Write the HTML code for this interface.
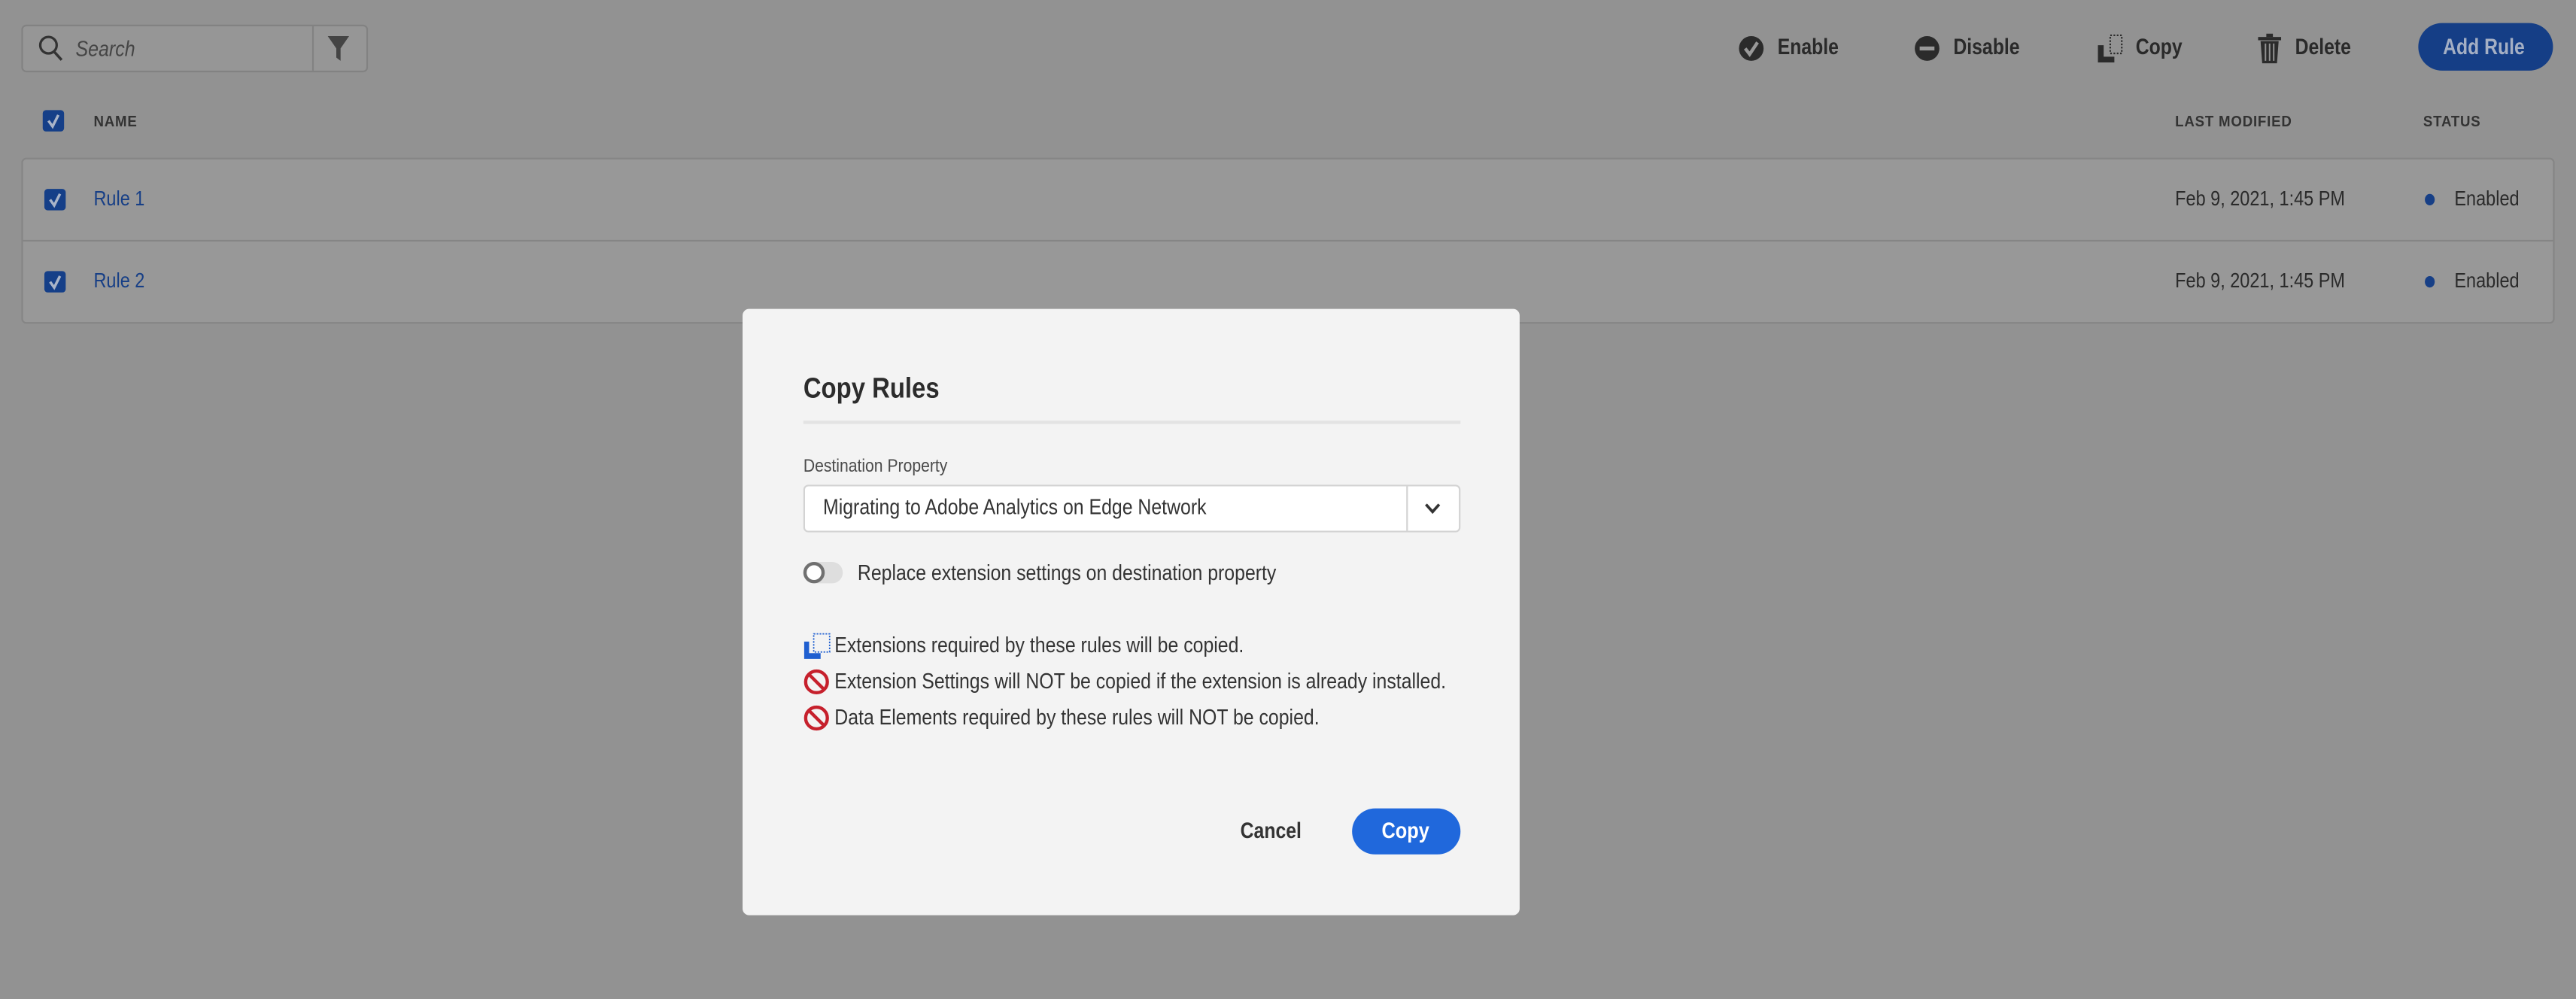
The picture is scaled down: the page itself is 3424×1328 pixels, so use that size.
<!DOCTYPE html>
<html><head><meta charset="utf-8">
<style>
html,body{margin:0;padding:0;width:3424px;height:1328px;overflow:hidden;background:#929292;}
#r{position:absolute;left:0;top:0;width:1568px;height:608px;transform:scale(2.18367,2.18421);transform-origin:0 0;font-family:"Liberation Sans",sans-serif;color:#2c2c2c;}
.a{position:absolute;}
.t{position:absolute;white-space:nowrap;transform-origin:0 50%;}
.cb{position:absolute;width:13px;height:13px;background:#153f88;border-radius:2px;}
.cb svg{position:absolute;left:0;top:0}
.hd{font-size:9.5px;font-weight:bold;color:#333;letter-spacing:.4px;transform:scaleX(.9);}
.tb{font-size:13.5px;font-weight:bold;color:#2a2a2a;transform:scaleX(.84);}
.cell{font-size:12.5px;color:#2a2a2a;transform:scaleX(.86);}
.dl{font-size:13px;color:#333;transform:scaleX(.875);}
</style></head><body>
<div id="r">
<!-- search -->
<div class="a" style="left:13px;top:15px;width:209px;height:27px;border:1px solid #828282;border-radius:3px;background:#969696"></div>
<div class="a" style="left:190px;top:16px;width:1px;height:27px;background:#828282"></div>
<svg class="a" style="left:23px;top:21px" width="16" height="17" viewBox="0 0 16 17"><circle cx="6.5" cy="6.5" r="5" fill="none" stroke="#333" stroke-width="1.5"/><line x1="10" y1="10.5" x2="14.5" y2="15.5" stroke="#333" stroke-width="1.6"/></svg>
<div class="t" style="left:46px;top:22px;font-size:13px;font-style:italic;color:#454545;transform:scaleX(.88)">Search</div>
<svg class="a" style="left:199px;top:21px" width="14" height="17" viewBox="0 0 14 17"><path d="M0.5 1H13.5L8.3 8.5V16L5.7 14V8.5Z" fill="#444"/></svg>

<!-- toolbar -->
<svg class="a" style="left:1058px;top:21px" width="16" height="17" viewBox="0 0 16 17"><circle cx="8" cy="8.5" r="7.5" fill="#2b2b2b"/><path d="M4.3 8.5L7 12L11.8 4.8" fill="none" stroke="#999" stroke-width="2"/></svg>
<div class="t tb" style="left:1082px;top:21px">Enable</div>
<svg class="a" style="left:1165px;top:21px" width="16" height="17" viewBox="0 0 16 17"><circle cx="8" cy="8.5" r="7.5" fill="#2b2b2b"/><rect x="3.5" y="7.3" width="9" height="2.4" fill="#999"/></svg>
<div class="t tb" style="left:1189px;top:21px">Disable</div>
<svg class="a" style="left:1276px;top:20px" width="17" height="19" viewBox="0 0 17 19"><rect x="8.5" y="1.5" width="7" height="11" fill="none" stroke="#2b2b2b" stroke-width="1" stroke-dasharray="1 1"/><path d="M1 7.5H4.5V14.5H11V18H1Z" fill="#2b2b2b"/></svg>
<div class="t tb" style="left:1300px;top:21px">Copy</div>
<svg class="a" style="left:1374px;top:20px" width="15" height="19" viewBox="0 0 15 19"><rect x="5.5" y="0.5" width="4" height="2" fill="#2b2b2b"/><rect x="0.5" y="2.5" width="14" height="2" fill="#2b2b2b"/><path d="M2 5H13L12 18.5H3Z" fill="#2b2b2b"/><path d="M5 6.5V17M7.5 6.5V17M10 6.5V17" stroke="#939393" stroke-width=".9"/></svg>
<div class="t tb" style="left:1397px;top:21px">Delete</div>
<div class="a" style="left:1472px;top:14px;width:82px;height:29px;border-radius:15px;background:#153e86"></div>
<div class="t tb" style="left:1487px;top:21px;color:#a4afc4;transform:scaleX(.84)">Add Rule</div>

<!-- header -->
<div class="cb" style="left:26px;top:67px"><svg width="13" height="13" viewBox="0 0 13 13"><path d="M3.5 6.5L6 10L9.5 3" fill="none" stroke="#a9b4c8" stroke-width="1.6"/></svg></div>
<div class="t hd" style="left:57px;top:69px">NAME</div>
<div class="t hd" style="left:1324px;top:69px">LAST MODIFIED</div>
<div class="t hd" style="left:1475px;top:69px">STATUS</div>

<!-- table -->
<div class="a" style="left:13px;top:96px;width:1540px;height:99px;border:1px solid #858585;border-radius:3px;background:#989898"></div>
<div class="a" style="left:14px;top:146px;width:1540px;height:1px;background:#858585"></div>
<div class="cb" style="left:27px;top:115px"><svg width="13" height="13" viewBox="0 0 13 13"><path d="M3.5 6.5L6 10L9.5 3" fill="none" stroke="#a9b4c8" stroke-width="1.6"/></svg></div>
<div class="t cell" style="left:57px;top:114px;color:#173f86">Rule 1</div>
<div class="t cell" style="left:1324px;top:114px">Feb 9, 2021, 1:45 PM</div>
<div class="a" style="left:1476px;top:118px;width:6px;height:7px;border-radius:50%;background:#173f86"></div>
<div class="t cell" style="left:1494px;top:114px">Enabled</div>
<div class="cb" style="left:27px;top:165px"><svg width="13" height="13" viewBox="0 0 13 13"><path d="M3.5 6.5L6 10L9.5 3" fill="none" stroke="#a9b4c8" stroke-width="1.6"/></svg></div>
<div class="t cell" style="left:57px;top:164px;color:#173f86">Rule 2</div>
<div class="t cell" style="left:1324px;top:164px">Feb 9, 2021, 1:45 PM</div>
<div class="a" style="left:1476px;top:168px;width:6px;height:7px;border-radius:50%;background:#173f86"></div>
<div class="t cell" style="left:1494px;top:164px">Enabled</div>

<!-- dialog -->
<div class="a" style="left:452px;top:188px;width:473px;height:369px;background:#f3f3f3;border-radius:4px"></div>
<div class="t" style="left:489px;top:226px;font-size:17.5px;font-weight:bold;color:#2c2c2c;transform:scaleX(.86)">Copy Rules</div>
<div class="a" style="left:489px;top:256px;width:400px;height:2px;background:#e3e3e3"></div>
<div class="t" style="left:489px;top:278px;font-size:11px;color:#4b4b4b;transform:scaleX(.88)">Destination Property</div>
<div class="a" style="left:489px;top:295px;width:398px;height:27px;border:1px solid #d3d3d3;border-radius:3px;background:#fff"></div>
<div class="a" style="left:856px;top:296px;width:1px;height:27px;background:#d3d3d3"></div>
<svg class="a" style="left:866px;top:305px" width="12" height="9" viewBox="0 0 12 9"><path d="M2 2L6 6.5L10 2" fill="none" stroke="#333" stroke-width="1.7"/></svg>
<div class="t dl" style="left:501px;top:301px;font-size:13px">Migrating to Adobe Analytics on Edge Network</div>
<div class="a" style="left:489px;top:342px;width:24px;height:13px;border-radius:7px;background:#dedede"></div>
<div class="a" style="left:489px;top:342px;width:9px;height:9px;border-radius:50%;border:2px solid #707070;background:#fff"></div>
<div class="t dl" style="left:522px;top:341px">Replace extension settings on destination property</div>

<svg class="a" style="left:489px;top:385px" width="17" height="17" viewBox="0 0 17 17"><rect x="6.3" y="0.8" width="9.7" height="11" fill="none" stroke="#1f5fd0" stroke-width=".8" stroke-dasharray="1 .8"/><path d="M0.5 5.5H3.5V12.5H10.5V16H0.5Z" fill="#1f5fd0"/></svg>
<div class="t dl" style="left:508px;top:385px">Extensions required by these rules will be copied.</div>
<svg class="a" style="left:489px;top:407px" width="16" height="16" viewBox="0 0 16 16"><circle cx="8" cy="8" r="6.6" fill="none" stroke="#c6202c" stroke-width="2"/><line x1="3.5" y1="3.5" x2="12.5" y2="12.5" stroke="#c6202c" stroke-width="2"/></svg>
<div class="t dl" style="left:508px;top:407px">Extension Settings will NOT be copied if the extension is already installed.</div>
<svg class="a" style="left:489px;top:429px" width="16" height="16" viewBox="0 0 16 16"><circle cx="8" cy="8" r="6.6" fill="none" stroke="#c6202c" stroke-width="2"/><line x1="3.5" y1="3.5" x2="12.5" y2="12.5" stroke="#c6202c" stroke-width="2"/></svg>
<div class="t dl" style="left:508px;top:429px">Data Elements required by these rules will NOT be copied.</div>

<div class="t" style="left:755px;top:498px;font-size:13.5px;font-weight:bold;color:#333;transform:scaleX(.84)">Cancel</div>
<div class="a" style="left:823px;top:492px;width:66px;height:28px;border-radius:14px;background:#2068dc"></div>
<div class="t" style="left:841px;top:498px;font-size:13.5px;font-weight:bold;color:#fff;transform:scaleX(.86)">Copy</div>
</div>
</body></html>
